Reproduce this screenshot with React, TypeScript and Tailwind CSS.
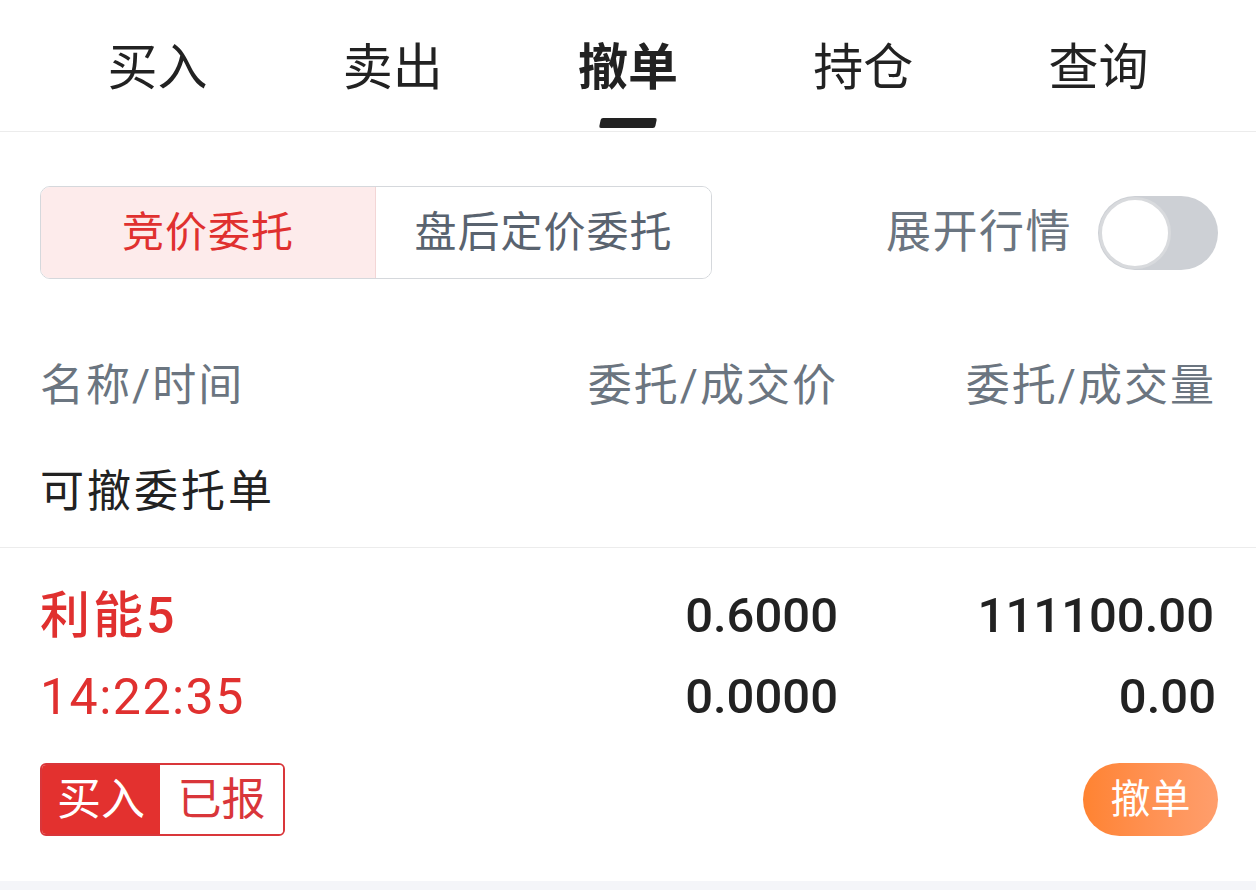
import React from 'react';

const tabs = ['买入', '卖出', '撤单', '持仓', '查询'];

export default function App() {
  const active = 2;

  return (
    <div
      className="w-[1256px] h-[890px] bg-white overflow-hidden flex flex-col"
      style={{ fontFamily: 'Roboto, "Noto Sans CJK SC", sans-serif' }}
    >
      {/* Top tabs */}
      <div className="h-[132px] shrink-0 border-b border-[#ececec] px-10 flex">
        {tabs.map((t, i) => (
          <div key={t} className="flex-1 flex flex-col items-center">
            <div
              className={`mt-[36px] h-[64px] leading-[64px] text-[50px] text-[#222] ${
                i === active ? 'font-bold' : 'font-normal'
              }`}
            >
              {t}
            </div>
            {i === active && (
              <div className="mt-[18px] w-[56px] h-[10px] bg-[#222] -skew-x-12 rounded-[2px]" />
            )}
          </div>
        ))}
      </div>

      {/* Segment + toggle */}
      <div className="mt-[54px] pl-10 pr-[38px] flex items-center justify-between">
        <div className="flex h-[93px] rounded-[10px] overflow-hidden border border-[#d5d8dc]">
          <div className="w-[335px] bg-[#fdebeb] border-r border-[#f3d6d6] flex items-center justify-center text-[42px] tracking-[1px] text-[#e0302f]">
            竞价委托
          </div>
          <div className="w-[335px] bg-white flex items-center justify-center text-[42px] tracking-[1px] text-[#59636f]">
            盘后定价委托
          </div>
        </div>
        <div className="flex items-center gap-[26px]">
          <span className="text-[45px] tracking-[1.5px] text-[#6b7580]">展开行情</span>
          <div className="w-[120px] h-[74px] rounded-full bg-[#cdd0d5] p-[1px] flex items-center">
            <div className="w-[72px] h-[72px] rounded-full bg-white border-[3px] border-[#d8dadd]" />
          </div>
        </div>
      </div>

      {/* Header row */}
      <div className="mt-[77px] px-10 flex items-center h-[60px] text-[44px] tracking-[2px] text-[#6b7580]">
        <div className="flex-1">名称/时间</div>
        <div className="w-[320px] text-right">委托/成交价</div>
        <div className="w-[378px] text-right">委托/成交量</div>
      </div>

      <div className="mt-[46px] px-10 h-[60px] flex items-center text-[44px] tracking-[3px] text-[#222]">
        可撤委托单
      </div>

      <div className="mt-[25px] border-t border-[#ececec]" />

      {/* Order row */}
      <div className="px-10 pt-[40px] flex-1">
        <div className="flex items-center h-[56px] text-[49px] font-medium">
          <div className="flex-1 text-[#e0302f] text-[50px] tracking-[3px]">利能5</div>
          <div className="w-[320px] text-right text-[#222]">0.6000</div>
          <div className="w-[378px] text-right text-[#222] pr-[2px]">111100.00</div>
        </div>
        <div className="flex items-center h-[56px] mt-[25px] text-[49px]">
          <div className="flex-1 text-[#e0302f] text-[50px] tracking-[1.5px]">14:22:35</div>
          <div className="w-[320px] text-right text-[#222] font-medium">0.0000</div>
          <div className="w-[378px] text-right text-[#222] font-medium">0.00</div>
        </div>
        <div className="mt-[38px] flex items-center justify-between">
          <div className="flex h-[73px] rounded-[6px] overflow-hidden border-2 border-[#d9363a]">
            <div className="w-[118px] bg-[#e3312f] text-white text-[44px] flex items-center justify-center">
              买入
            </div>
            <div className="w-[123px] bg-white text-[#d9363a] text-[44px] flex items-center justify-center">
              已报
            </div>
          </div>
          <button className="mr-[-2px] w-[135px] h-[73px] rounded-full bg-gradient-to-r from-[#ff8331] to-[#ff9e6c] text-white text-[40px] flex items-center justify-center">
            撤单
          </button>
        </div>
      </div>

      <div className="h-[9px] bg-[#f4f5f9] shrink-0" />
    </div>
  );
}
